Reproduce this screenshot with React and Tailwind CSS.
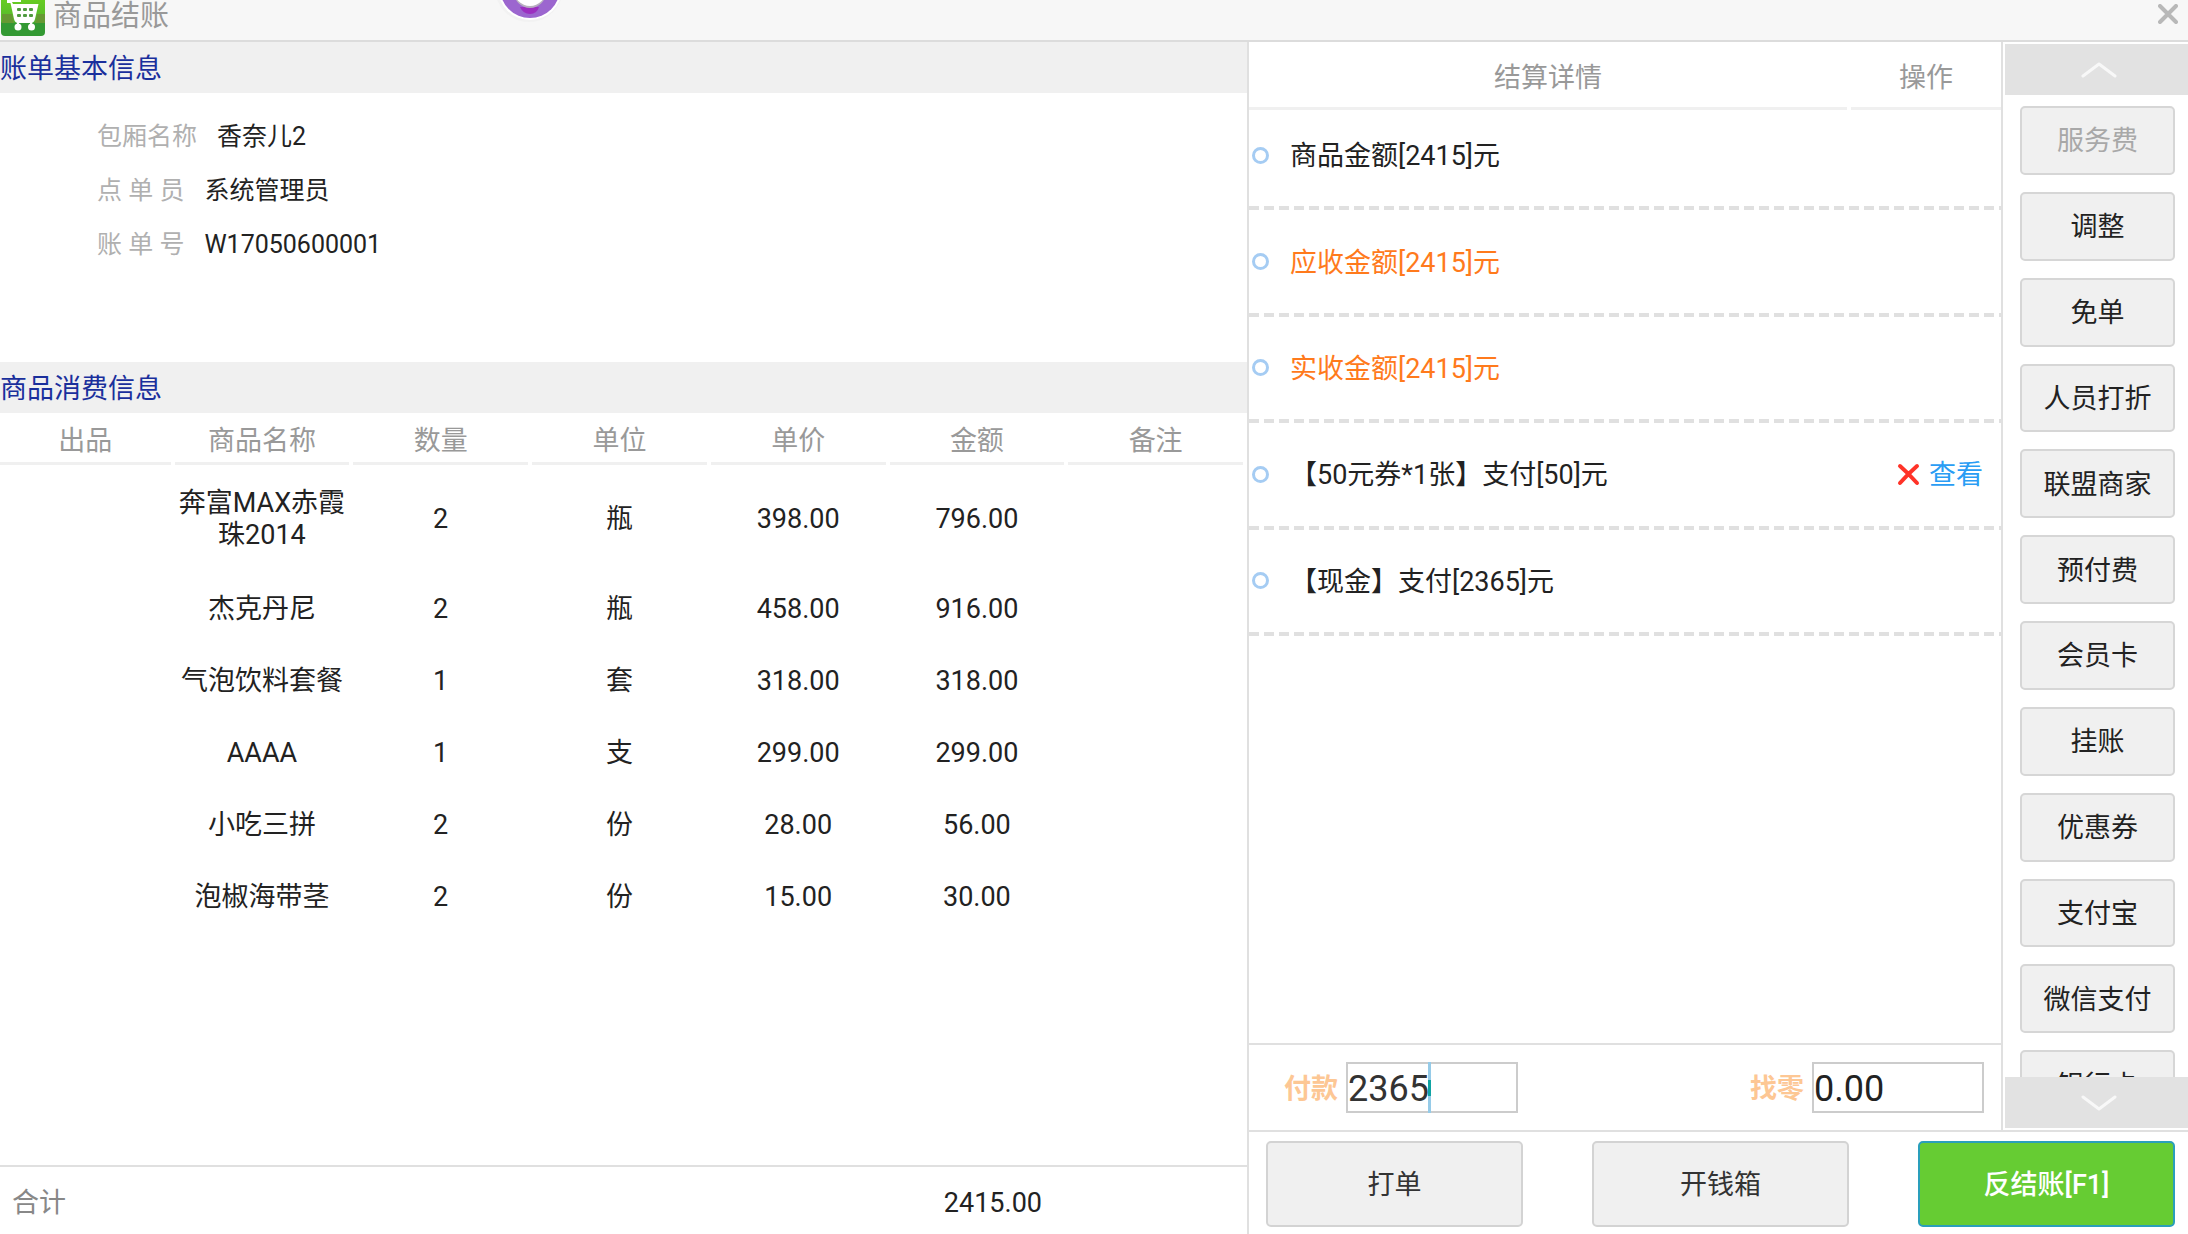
const GOODS = [
  { name: '奔富MAX赤霞珠2014', count: '2', unit: '瓶', price: '398.00', total: '796.00' },
  { name: '杰克丹尼', count: '2', unit: '瓶', price: '458.00', total: '916.00' },
  { name: '气泡饮料套餐', count: '1', unit: '套', price: '318.00', total: '318.00' },
  { name: 'AAAA', count: '1', unit: '支', price: '299.00', total: '299.00' },
  { name: '小吃三拼', count: '2', unit: '份', price: '28.00', total: '56.00' },
  { name: '泡椒海带茎', count: '2', unit: '份', price: '15.00', total: '30.00' },
];

const COLUMNS = ['出品', '商品名称', '数量', '单位', '单价', '金额', '备注'];

const INFO = [
  { label: '包厢名称', value: '香奈儿2' },
  { label: '点 单 员', value: '系统管理员' },
  { label: '账 单 号', value: 'W17050600001' },
];

const DETAILS = [
  { text: '商品金额[2415]元' },
  { text: '应收金额[2415]元', highlight: true },
  { text: '实收金额[2415]元', highlight: true },
  { text: '【50元券*1张】支付[50]元', removable: true },
  { text: '【现金】支付[2365]元' },
];

const ACTIONS = [
  '服务费', '调整', '免单', '人员打折', '联盟商家', '预付费',
  '会员卡', '挂账', '优惠券', '支付宝', '微信支付', '银行卡',
];

function CartIcon() {
  return (
    <svg viewBox="0 0 46 37" className="w-[46px] h-[37px] shrink-0" aria-hidden="true">
      <defs>
        <linearGradient id="cart-bg" x1="0" y1="0" x2="0" y2="1">
          <stop offset="0" stopColor="#66cc22" />
          <stop offset="0.6" stopColor="#55b82e" />
          <stop offset="0.65" stopColor="#339933" />
          <stop offset="1" stopColor="#339933" />
        </linearGradient>
      </defs>
      <path d="M1 0H45V32a4 4 0 0 1-4 4H5a4 4 0 0 1-4-4Z" fill="url(#cart-bg)" />
      <path d="M2 14H12L14 23H2Z" fill="#669933" />
      <path d="M37 14H45V23H35Z" fill="#669933" />
      <path d="M7 0H21V2H12L13 4H38.500L35 19Q34 23 31 23H18Q15 23 14 19L10.500 3H7Z" fill="#fff" />
      <g fill="#4f9a3f">
        <rect x="17" y="8" width="4" height="3" rx="1" />
        <rect x="23" y="8" width="4" height="3" rx="1" />
        <rect x="29" y="8" width="4" height="3" rx="1" />
        <rect x="17" y="14" width="4" height="3" rx="1" />
        <rect x="23" y="14" width="4" height="3" rx="1" />
        <rect x="29" y="14" width="4" height="3" rx="1" />
      </g>
      <path d="M18 22V26M31 22V26" stroke="#fff" strokeWidth="2" />
      <circle cx="18" cy="27" r="3.500" fill="#fff" />
      <circle cx="31.500" cy="27" r="3.500" fill="#fff" />
    </svg>
  );
}

function Arrow({ d }) {
  return (
    <svg viewBox="0 0 36 18" className="w-9 h-[18px]" fill="none" stroke="currentColor" strokeWidth="3" strokeLinecap="round" strokeLinejoin="round">
      <path d={d} />
    </svg>
  );
}

function SectionTitle({ children }) {
  return <h2 className="h-[51px] pt-0.5 flex items-center bg-[#f0f0f0] text-[#1a2f9c] shrink-0">{children}</h2>;
}

function BillPanel() {
  return (
    <section className="flex-[1247] min-w-0 flex flex-col border-r-2 border-[#e0e0e0]">
      <SectionTitle>账单基本信息</SectionTitle>
      <dl className="h-[269px] pt-[17px] pl-[97px] shrink-0">
        {INFO.map((item) => (
          <div key={item.label} className="h-[54px] flex items-center gap-5 text-[25px]">
            <dt className="text-[#b0b0b0]">{item.label}</dt>
            <dd className="text-[#222]">{item.value}</dd>
          </div>
        ))}
      </dl>
      <SectionTitle>商品消费信息</SectionTitle>
      <table className="w-full table-fixed border-collapse text-center">
        <colgroup>
          <col className="w-[14%]" />
        </colgroup>
        <thead>
          <tr>
            {COLUMNS.map((col) => (
              <th key={col} className="p-0 pr-1 font-normal text-[#999]">
                <div className="h-[52px] pt-1.5 flex items-center justify-center border-b-[3px] border-[#f0f0f0]">{col}</div>
              </th>
            ))}
          </tr>
        </thead>
        <tbody className="text-[#222]">
          {GOODS.map((row) => (
            <tr key={row.name} className="h-[72px]">
              <td />
              <td className={row.name.length > 8 ? 'pr-1 py-[22px]' : 'pr-1 py-0'}>{row.name}</td>
              <td className="pr-1">{row.count}</td>
              <td className="pr-1">{row.unit}</td>
              <td className="pr-1">{row.price}</td>
              <td className="pr-1">{row.total}</td>
              <td />
            </tr>
          ))}
        </tbody>
      </table>
      <div className="mt-auto h-[69px] pt-1 flex items-center justify-between border-t-2 border-[#e0e0e0] pl-3 pr-[205px]">
        <span className="text-[#888]">合计</span>
        <span className="text-[#222]">2415.00</span>
      </div>
    </section>
  );
}

function DetailPanel() {
  return (
    <section className="flex-1 min-w-0 flex flex-col">
      <div className="h-[68px] flex gap-1 text-[#999] shrink-0">
        <div className="flex-1 pt-1.5 flex items-center justify-center border-b-[3px] border-[#f0f0f0]">结算详情</div>
        <div className="w-[150px] pt-1.5 flex items-center justify-center border-b-[3px] border-[#f0f0f0]">操作</div>
      </div>
      <ul className="h-[532px] grid grid-rows-5 -mt-1.5 shrink-0">
        {DETAILS.map((item) => (
          <li key={item.text} className="flex flex-col">
            <div className="flex-1 flex items-center pl-[3px] pr-[18px]">
              <span className="size-[17px] rounded-full border-[3px] border-[#a5ccf3]" />
              <span className={item.highlight ? 'ml-[21px] pt-0.5 text-[#ff7a1c]' : 'ml-[21px] pt-0.5 text-[#222]'}>{item.text}</span>
              {item.removable && (
                <span className="ml-auto pt-0.5 flex items-center gap-2">
                  <button type="button" aria-label="删除">
                    <svg viewBox="0 0 24 24" className="size-6" fill="none" stroke="#ff3328" strokeWidth="4" strokeLinecap="round">
                      <path d="M3 3Q11 10 20 20M20 3Q11 11 3 20" />
                    </svg>
                  </button>
                  <a href="#view" className="text-[#2a9df4]">查看</a>
                </span>
              )}
            </div>
            <div className="h-1 bg-[repeating-linear-gradient(90deg,#e0e0e0_0_10px,transparent_10px_15px)]" />
          </li>
        ))}
      </ul>
      <div className="mt-auto h-[87px] flex items-center justify-between border-t-2 border-[#e0e0e0] pl-[35px] pr-[17px] shrink-0">
        <div className="flex items-center gap-2">
          <label htmlFor="paid" className="pt-0.5 font-bold text-[#fdc794]">付款</label>
          <div className="relative">
            <input
              id="paid"
              defaultValue="2365"
              className="block w-[172px] h-[51px] pt-0.5 border-2 border-[#ccc] bg-white text-4xl text-[#333] outline-none"
            />
            <span className="absolute top-0 left-[82px] flex items-center w-[3px] h-full bg-[#96cbe8]">
              <span className="w-full h-4 bg-[#0fa3a3]" />
            </span>
          </div>
        </div>
        <div className="flex items-center gap-2">
          <label htmlFor="change" className="pt-0.5 font-bold text-[#fdc794]">找零</label>
          <input
            id="change"
            defaultValue="0.00"
            className="block w-[172px] h-[51px] pt-0.5 border-2 border-[#ccc] bg-white text-4xl text-[#222] outline-none"
          />
        </div>
      </div>
    </section>
  );
}

function ActionSidebar() {
  return (
    <aside className="w-[187px] flex flex-col border-l-2 border-[#e0e0e0] pl-0.5 py-0.5 shrink-0">
      <button type="button" aria-label="上翻" className="h-[51px] pl-1 flex items-center justify-center bg-[#e2e2e2] text-[#f8f8f8] shrink-0">
        <Arrow d="M2 15L18 3L34 15" />
      </button>
      <div className="flex-1 min-h-0 overflow-hidden pt-[11px] pl-[15px] pr-[13px]">
        <div className="h-[1013px] grid grid-rows-12 gap-[17px]">
          {ACTIONS.map((name, i) => (
            <button
              key={name}
              type="button"
              disabled={i === 0}
              className="pt-0.5 rounded-[5px] border-2 border-[#d6d6d6] bg-[#f0f0f0] text-[#222] disabled:text-[#a8a8a8]"
            >
              {name}
            </button>
          ))}
        </div>
      </div>
      <button type="button" aria-label="下翻" className="h-[51px] pl-1 flex items-center justify-center bg-[#e2e2e2] text-[#f8f8f8] shrink-0">
        <Arrow d="M2 3L18 15L34 3" />
      </button>
    </aside>
  );
}

export default function App() {
  return (
    <div className="h-screen flex flex-col overflow-hidden bg-white font-[Roboto,'Noto_Sans_CJK_SC',sans-serif] text-[27px] leading-8">
      <header className="relative h-[42px] flex items-start justify-between border-b-2 border-[#dcdcdc] bg-[#f7f7f7] shrink-0">
        <div className="flex items-start gap-[7px]">
          <CartIcon />
          <h1 className="text-[29px] leading-8 text-[#999]">商品结账</h1>
        </div>
        <svg viewBox="0 0 80 26" className="absolute top-0 left-[490px] w-20 h-[26px]" aria-hidden="true">
          <circle cx="39" cy="-12" r="34" fill="#f2f2f2" />
          <circle cx="40" cy="-12" r="32" fill="#fff" />
          <circle cx="40" cy="-12" r="30" fill="#9c66cf" />
          <path d="M30 7H49Q47 14 40 14Q33 14 30 7Z" fill="#9c2fc0" />
          <circle cx="40" cy="-8" r="16" fill="#b9b0c0" />
          <circle cx="40" cy="-10" r="16" fill="#fff" />
        </svg>
        <button type="button" aria-label="关闭" className="pt-1 pr-2.5">
          <svg viewBox="0 0 20 20" className="size-5" stroke="#b8b8b8" strokeWidth="4" strokeLinecap="round">
            <path d="M2 2L18 18M18 2L2 18" />
          </svg>
        </button>
      </header>
      <main className="flex-1 min-h-0 flex">
        <BillPanel />
        <div className="flex-[939] min-w-0 flex flex-col">
          <div className="flex-1 min-h-0 flex">
            <DetailPanel />
            <ActionSidebar />
          </div>
          <div className="h-[104px] flex items-start justify-between border-t-2 border-[#e0e0e0] pt-[9px] pl-[17px] pr-[13px] shrink-0">
            <button type="button" className="w-[257px] h-[86px] pt-0.5 rounded-[5px] border-2 border-[#d3d3d3] bg-[#f0f0f0] text-[#333]">打单</button>
            <button type="button" className="w-[257px] h-[86px] pt-0.5 rounded-[5px] border-2 border-[#d3d3d3] bg-[#f0f0f0] text-[#333]">开钱箱</button>
            <button type="button" className="w-[257px] h-[86px] pt-0.5 rounded-[5px] border-2 border-[#2a9fbb] bg-[#66cc33] font-medium text-white">反结账[F1]</button>
          </div>
        </div>
      </main>
    </div>
  );
}
